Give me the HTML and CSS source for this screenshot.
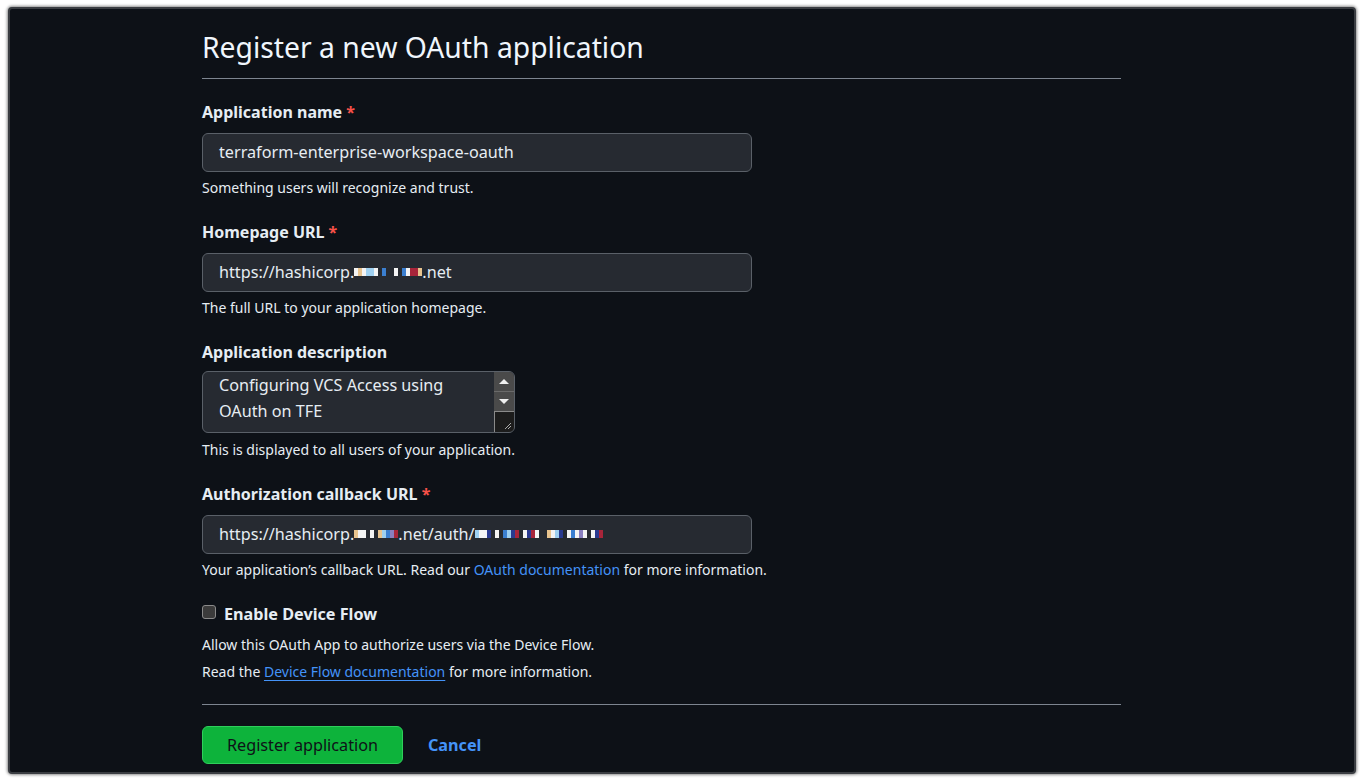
FILE: index.html
```html
<!DOCTYPE html>
<html lang="en">
<head>
    <meta charset="UTF-8">
    <meta name="viewport" content="width=device-width, initial-scale=1.0">
    <title>Register a new OAuth application</title>
    <link rel="stylesheet" href="styles.css">
</head>
<body>
<div class="frame">
    <main class="content">
        <h1 class="title">Register a new OAuth application</h1>

        <form class="oauth-form">
            <div class="group">
                <label class="label" for="appName">Application name <span class="req">*</span></label>
                <div class="field">terraform-enterprise-workspace-oauth</div>
                <p class="note">Something users will recognize and trust.</p>
            </div>

            <div class="group">
                <label class="label" for="homeUrl">Homepage URL <span class="req">*</span></label>
                <div class="field">https://hashicorp.<span class="redact"><i class="w"></i><i class="t"></i><i class="w"></i><i class="l"></i><i class="l"></i><i class="w"></i><i class="gap"></i><i class="b"></i><i class="gap"></i><i class="gap"></i><i class="w"></i><i class="gap"></i><i class="b"></i><i class="w"></i><i class="r"></i><i class="r"></i><i class="t"></i></span>.net</div>
                <p class="note">The full URL to your application homepage.</p>
            </div>

            <div class="group">
                <label class="label" for="appDesc">Application description</label>
                <div class="textarea-box">
                    <textarea class="textarea" id="appDesc">Configuring VCS Access using OAuth on TFE</textarea>
                    <div class="scrollbar">
                        <span class="arrow up"></span>
                        <span class="arrow down"></span>
                        <span class="resizer">
                            <svg width="8" height="8" viewBox="0 0 8 8"><path d="M7 1 L1 7 M7 4 L4 7" stroke="#aaa" stroke-width="1"/></svg>
                        </span>
                    </div>
                </div>
                <p class="note">This is displayed to all users of your application.</p>
            </div>

            <div class="group">
                <label class="label" for="callbackUrl">Authorization callback URL <span class="req">*</span></label>
                <div class="field">https://hashicorp.<span class="redact"><i class="t"></i><i class="w"></i><i class="w"></i><i class="gap"></i><i class="w"></i><i class="gap"></i><i class="t"></i><i class="l"></i><i class="b"></i><i class="p"></i><i class="r"></i></span>.net/auth/<span class="redact"><i class="l"></i><i class="w"></i><i class="w"></i><i class="n"></i><i class="gap"></i><i class="w"></i><i class="gap"></i><i class="b"></i><i class="l"></i><i class="n"></i><i class="r"></i><i class="gap"></i><i class="w"></i><i class="n"></i><i class="r"></i><i class="w"></i><i class="gap"></i><i class="gap"></i><i class="t"></i><i class="w"></i><i class="l"></i><i class="n"></i><i class="gap"></i><i class="w"></i><i class="b"></i><i class="w"></i><i class="p"></i><i class="w"></i><i class="gap"></i><i class="w"></i><i class="n"></i><i class="r"></i></span></div>
                <p class="note">Your application’s callback URL. Read our <a class="link" href="#">OAuth documentation</a> for more information.</p>
            </div>

            <div class="group">
                <label class="check-row">
                    <input type="checkbox" class="checkbox">
                    <span class="check-label">Enable Device Flow</span>
                </label>
                <p class="note note-first">Allow this OAuth App to authorize users via the Device Flow.</p>
                <p class="note">Read the <a class="link underline" href="#">Device Flow documentation</a> for more information.</p>
            </div>

            <div class="actions">
                <button type="button" class="btn-primary">Register application</button>
                <a class="cancel" href="#">Cancel</a>
            </div>
        </form>
    </main>
</div>
</body>
</html>
```

FILE: styles.css
```css
html, body {
    margin: 0;
    background: #fff;
}

body {
    padding: 7px 8px 9px 8px;
    font-family: "Noto Sans", "Open Sans", sans-serif;
    color: #e6edf3;
}

.frame {
    background: #0d1117;
    height: 767px;
    box-sizing: border-box;
    border: 2px solid #3a3d42;
    border-radius: 4px;
    box-shadow: 0 0 3px 1px #8a8a8a;
    padding-top: 20px;
}

.content {
    width: 919px;
    margin-left: 192px;
}

.title {
    margin: 0;
    font-size: 28.3px;
    font-weight: 400;
    line-height: 36px;
    padding-bottom: 13px;
    border-bottom: 1px solid #7d8590;
    color: #f0f6fc;
}

.oauth-form {
    margin: 0;
}

.group {
    margin-top: 22px;
}

.group:first-child {
    margin-top: 21px;
}

.label {
    display: block;
    font-size: 16px;
    font-weight: 700;
    line-height: 24px;
}

.req {
    color: #f85149;
}

.field {
    margin-top: 9px;
    width: 550px;
    height: 39px;
    box-sizing: border-box;
    padding: 0 16px;
    background: #262a31;
    border: 1px solid #5a6068;
    border-radius: 6px;
    font-size: 16.2px;
    line-height: 37px;
    white-space: nowrap;
    overflow: hidden;
}

/* zone de texte + fausse barre de défilement */
.textarea-box {
    display: flex;
    margin-top: 7px;
    width: 313px;
    height: 62px;
    box-sizing: border-box;
    background: #262a31;
    border: 1px solid #5a6068;
    border-radius: 6px;
    overflow: hidden;
}

.textarea {
    flex: 1;
    min-width: 0;
    margin: 0;
    padding: 0 0 0 16px;
    background: transparent;
    border: none;
    outline: none;
    resize: none;
    overflow: hidden;
    color: #e6edf3;
    font-family: inherit;
    font-size: 16.2px;
    line-height: 26px;
}

.scrollbar {
    width: 20px;
    display: flex;
    flex-direction: column;
    background: #4a4a4a;
}

.arrow {
    height: 19px;
    display: flex;
    align-items: center;
    justify-content: center;
}

.arrow.up {
    border-bottom: 1px solid #6a6a6a;
}

.arrow.up::before {
    content: "";
    border-left: 5px solid transparent;
    border-right: 5px solid transparent;
    border-bottom: 5px solid #f0f0f0;
}

.arrow.down::before {
    content: "";
    border-left: 5px solid transparent;
    border-right: 5px solid transparent;
    border-top: 5px solid #f0f0f0;
}

.resizer {
    flex: 1;
    background: #1c1c1c;
    border-left: 1px solid #8a8a8a;
    border-top: 1px solid #8a8a8a;
    display: flex;
    align-items: flex-end;
    justify-content: flex-end;
    padding: 0 2px 2px 0;
}

.note {
    margin: 6px 0 0 0;
    font-size: 14px;
    line-height: 20px;
}

.textarea-box + .note {
    margin-top: 7px;
}

.note-first {
    margin-top: 9px;
}

.note-first + .note {
    margin-top: 7px;
}

.link {
    color: #4493f8;
    text-decoration: none;
}

.underline {
    text-decoration: underline;
    text-underline-offset: 3px;
}

.redact {
    display: inline-block;
    vertical-align: middle;
    height: 8px;
    margin-top: -3px;
}

.redact i {
    display: inline-block;
    width: 4px;
    height: 8px;
    vertical-align: top;
}

.redact .w { background: #f4f4f4; }
.redact .t { background: #e8c48f; }
.redact .l { background: #9fd0f0; }
.redact .b { background: #3b7fd0; }
.redact .n { background: #2a3a8f; }
.redact .r { background: #a8253a; }
.redact .p { background: #8a7fc0; }
.redact .gap { background: transparent; }

.check-row {
    display: flex;
    align-items: center;
    gap: 8px;
    height: 24px;
}

.checkbox {
    appearance: none;
    margin: 0;
    width: 14px;
    height: 14px;
    background: #3b3b3b;
    border: 1px solid #8a8a8a;
    border-radius: 3px;
    position: relative;
    top: -2px;
}

.check-label {
    font-size: 16.2px;
    font-weight: 700;
}

.actions {
    margin-top: 22px;
    padding-top: 21px;
    border-top: 1px solid #7d8590;
    display: flex;
    align-items: center;
    gap: 25px;
}

.btn-primary {
    height: 38px;
    padding: 0 24px;
    background: #0db33b;
    border: 1px solid #2fcf5b;
    border-radius: 6px;
    color: #0d1117;
    font-family: inherit;
    font-size: 16.2px;
}

.cancel {
    color: #4493f8;
    font-size: 16.2px;
    font-weight: 700;
    text-decoration: none;
}
```
